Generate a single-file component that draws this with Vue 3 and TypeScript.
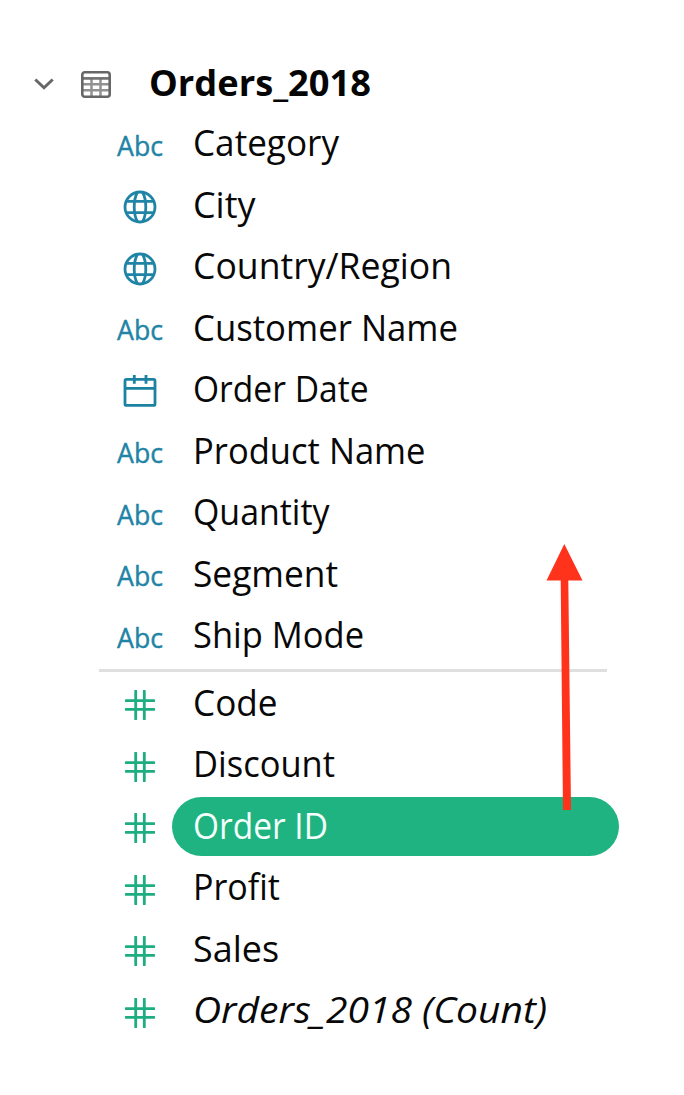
<script setup lang="ts">
type Kind = 'text' | 'geo' | 'date' | 'number'

interface Field {
  name: string
  kind: Kind
  width: number
  selected?: boolean
  italic?: boolean
}

const dimensions: Field[] = [
  { name: 'Category', kind: 'text', width: 146 },
  { name: 'City', kind: 'geo', width: 62.5 },
  { name: 'Country/Region', kind: 'geo', width: 259 },
  { name: 'Customer Name', kind: 'text', width: 265 },
  { name: 'Order Date', kind: 'date', width: 175.5 },
  { name: 'Product Name', kind: 'text', width: 232.5 },
  { name: 'Quantity', kind: 'text', width: 136.5 },
  { name: 'Segment', kind: 'text', width: 145 },
  { name: 'Ship Mode', kind: 'text', width: 171 },
]

const measures: Field[] = [
  { name: 'Code', kind: 'number', width: 84.5 },
  { name: 'Discount', kind: 'number', width: 142 },
  { name: 'Order ID', kind: 'number', width: 135, selected: true },
  { name: 'Profit', kind: 'number', width: 87 },
  { name: 'Sales', kind: 'number', width: 86 },
  { name: 'Orders_2018 (Count)', kind: 'number', width: 354, italic: true },
]

const groups = [dimensions, measures]
</script>

<template>
  <main class="pane">
    <header class="table">
      <svg class="chevron" viewBox="0 0 20 12"><path d="M1.3 1.5 10 9.8l8.7-8.3" /></svg>
      <svg class="grid-icon" viewBox="0 0 30 27">
        <path class="lines" d="M2 13.2h26M2 19.2h26M10.5 7v18.5M19.5 7v18.5" />
        <path class="head" d="M1.5 7.4h27" />
        <rect class="frame" x="1.3" y="1.3" width="27.4" height="24.4" rx="2.5" />
      </svg>
      <svg class="title" width="260" height="56">
        <text x="0" y="39.5" textLength="222" lengthAdjust="spacingAndGlyphs">Orders_2018</text>
      </svg>
    </header>

    <ul v-for="(group, i) in groups" :key="i" class="group">
      <li v-for="field in group" :key="field.name" class="field">
        <span class="icon">
          <svg v-if="field.kind === 'text'" class="abc" width="50" height="40">
            <text x="2" y="29.6" textLength="46" lengthAdjust="spacingAndGlyphs">Abc</text>
          </svg>
          <svg v-else-if="field.kind === 'geo'" class="globe" viewBox="0 0 34 34">
            <circle cx="17" cy="17" r="15" />
            <path d="M3.5 11.3h27M3.5 22.7h27M14.3 2.5C10.2 10 10.2 24 14.3 31.5M19.7 2.5c4.1 7.5 4.1 21.5 0 29" />
          </svg>
          <svg v-else-if="field.kind === 'date'" class="calendar" viewBox="0 0 34 32">
            <rect x="2" y="4.4" width="30" height="26" rx="1.5" />
            <path d="M2 13.3h30M11.3 0v8.8M23 0v8.8" />
          </svg>
          <svg v-else class="hash" viewBox="0 0 30 30">
            <path d="M10.7 1v28M19.3 1v28M1 10.7h28M1 19.3h28" />
          </svg>
        </span>
        <div class="pill" :class="{ selected: field.selected }">
          <svg class="name" :class="{ italic: field.italic }" width="400" height="59">
            <text x="0" y="42" :textLength="field.width" lengthAdjust="spacingAndGlyphs">{{ field.name }}</text>
          </svg>
        </div>
      </li>
    </ul>

    <svg class="arrow" viewBox="0 0 40 268">
      <path d="M18.3 0 36.5 36.5H22.3L25 266H17L14.7 36.5H.5Z" />
    </svg>
  </main>
</template>

<style>
body {
  background: #fff;
}
</style>

<style scoped>
.pane {
  position: relative;
  box-sizing: border-box;
  width: 684px;
  height: 1095px;
  padding-top: 55px;
  overflow: hidden;
  background: #fff;
  font-family: "Open Sans", "Noto Sans", sans-serif;
}

svg {
  display: block;
  flex: none;
}

svg text {
  white-space: pre;
}

.table {
  display: flex;
  align-items: center;
  height: 58px;
  padding-left: 34px;
}

.chevron {
  width: 20px;
  height: 12px;
  fill: none;
  stroke: #676767;
  stroke-width: 3;
}

.grid-icon {
  width: 30px;
  height: 27px;
  margin-left: 27px;
  fill: none;
}

.lines {
  stroke: #929292;
  stroke-width: 2.5;
}

.head {
  stroke: #727272;
  stroke-width: 2.7;
}

.frame {
  stroke: #676767;
  stroke-width: 2.6;
}

.title {
  margin-left: 38px;
  overflow: visible;
  fill: #050505;
  font-size: 36px;
  font-weight: 700;
}

.group {
  margin: 0;
  padding: 0;
  list-style: none;
}

.group + .group {
  position: relative;
  padding-top: 6px;
}

.group + .group::before {
  content: "";
  position: absolute;
  top: 2px;
  left: 99px;
  width: 508px;
  height: 3px;
  background: #dfdfdf;
}

.field {
  display: flex;
  align-items: center;
  height: 61.5px;
}

.icon {
  display: flex;
  justify-content: center;
  width: 50px;
  margin-left: 115px;
  padding-top: 3.5px;
}

.abc {
  fill: #1f84a5;
  stroke: #1f84a5;
  stroke-width: 0.4;
  font-size: 27.5px;
}

.globe,
.calendar,
.hash {
  fill: none;
  stroke: #1f84a5;
  stroke-width: 2.8;
}

.globe {
  width: 34px;
  height: 34px;
}

.calendar {
  width: 34px;
  height: 32px;
  margin-top: -1px;
  stroke: #1b82a2;
}

.hash {
  width: 30px;
  height: 30px;
  stroke: #1dad80;
  stroke-linecap: round;
}

.pill {
  box-sizing: border-box;
  width: 447px;
  height: 59px;
  margin-left: 7px;
  padding-left: 21px;
  border-radius: 30px;
}

.selected {
  background: #1fb381;
}

.name {
  overflow: visible;
  fill: #080808;
  font-size: 36.5px;
  font-weight: 400;
}

.selected .name {
  fill: #f4fffb;
}

.italic {
  font-style: italic;
}

.arrow {
  position: absolute;
  top: 543.5px;
  left: 546px;
  width: 40px;
  height: 268px;
  fill: #ff321b;
}
</style>
